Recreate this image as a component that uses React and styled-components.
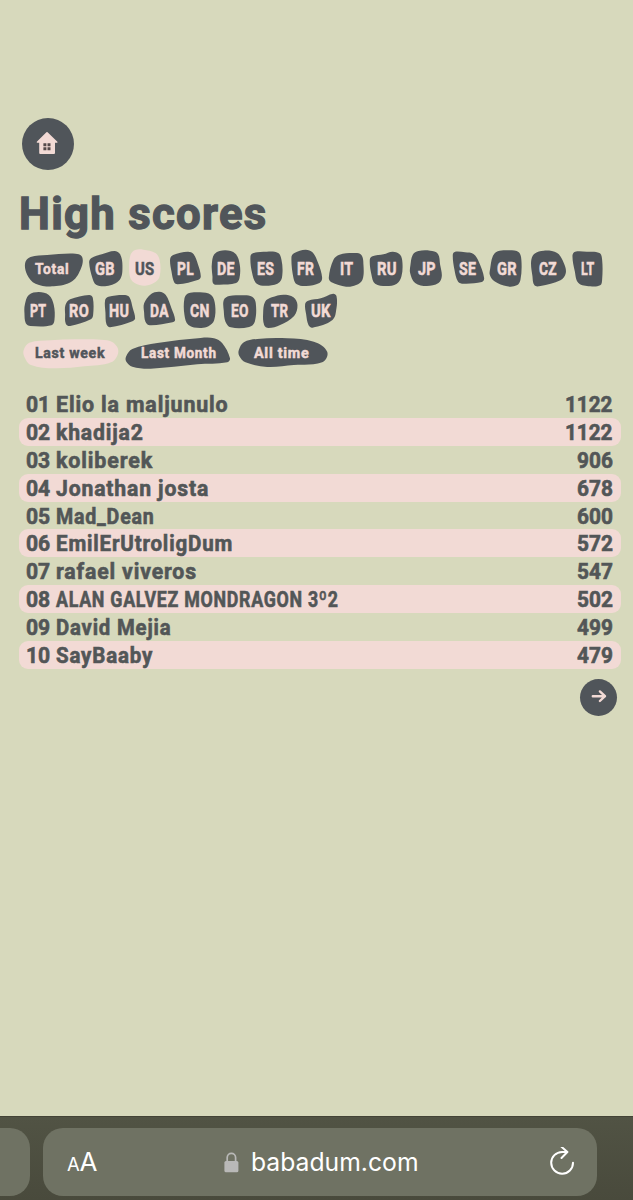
import React, { useLayoutEffect, useRef, useState } from "react";
import styled, { createGlobalStyle } from "styled-components";

const GlobalStyle = createGlobalStyle`
  * {
    box-sizing: border-box;
  }
  body {
    margin: 0;
    background: #d7d9bc;
    font-family: Roboto, "Liberation Sans", sans-serif;
  }
`;

const slate = "#50555a";
const pink = "#f2dad5";

const Page = styled.div`
  width: 633px;
  height: 1200px;
  display: flex;
  flex-direction: column;
  overflow: hidden;
  background: #d7d9bc;
  color: ${slate};
`;

const Content = styled.main`
  flex: 1;
  padding: 118px 12px 0 18.5px;
`;

const RoundButton = styled.button`
  display: flex;
  align-items: center;
  justify-content: center;
  width: ${(props) => props.$size}px;
  height: ${(props) => props.$size}px;
  padding: 0;
  border: 0;
  border-radius: 50%;
  background: ${slate};
  cursor: pointer;
`;

const HomeLine = styled.div`
  height: 52px;
  padding-left: 3.5px;
`;

const Title = styled.h1`
  height: 78px;
  margin: 0;
  padding: 17px 0 0 0;
  font-size: 45px;
  line-height: 53px;
  font-weight: 700;
  letter-spacing: 0.03em;
  -webkit-text-stroke: 1.3px ${slate};
`;

const TagList = styled.nav`
  display: flex;
  flex-wrap: wrap;
`;

const Tag = styled.a`
  display: grid;
  place-items: center;
  width: ${(props) => props.$width}px;
  height: 42px;
  color: ${(props) => (props.$active ? slate : pink)};
  font-size: ${(props) => props.$size}px;
  line-height: 20px;
  font-weight: 700;
  letter-spacing: ${(props) => props.$spacing}em;
  -webkit-text-stroke: 0.5px currentColor;
  cursor: pointer;

  & > * {
    grid-area: 1 / 1;
  }
`;

const Blob = styled.svg`
  width: 100%;
  height: 42px;
  overflow: visible;
  fill: ${(props) => (props.$active ? pink : slate)};
`;

const FitBox = styled.span`
  display: inline-flex;
  justify-content: ${(props) => (props.$align === "right" ? "flex-end" : "flex-start")};
  width: ${(props) => props.$width}px;
  white-space: nowrap;
`;

const FitInner = styled.span`
  flex: none;
  white-space: pre;
  transform-origin: ${(props) => props.$align} center;
`;

const Scores = styled.ol`
  margin: 16px 0 0;
  padding: 0;
  list-style: none;
`;

const ScoreRow = styled.li`
  display: flex;
  align-items: center;
  height: 27.9px;
  padding: 2px 8.5px 0 7px;
  border-radius: 9px;
  background: ${(props) => (props.$striped ? pink : "transparent")};
  color: #525657;
  font-size: 22px;
  line-height: 28px;
  font-weight: 700;
  -webkit-text-stroke: 0.6px currentColor;
`;

const Name = styled.span`
  flex: 1;
  margin-left: 6px;
  letter-spacing: 0.04em;
`;

const Pager = styled.div`
  display: flex;
  justify-content: flex-end;
  padding: 10px 4px 0 0;
`;

const BrowserBar = styled.footer`
  display: flex;
  gap: 13px;
  height: 84px;
  padding-top: 11px;
  border-top: 1px solid #434336;
  background: linear-gradient(#515344, #494a3c);
`;

const SideTab = styled.div`
  width: 30px;
  height: 68px;
  border-radius: 0 20px 20px 0;
  background: #6f7263;
`;

const AddressField = styled.div`
  display: flex;
  align-items: center;
  justify-content: space-between;
  width: 553.5px;
  height: 68px;
  padding: 0 22px 0 24px;
  border-radius: 20px;
  background: #6f7263;
  color: #fff;
  font-family: Inter, "Liberation Sans", sans-serif;
`;

const TextSize = styled.span`
  width: 27px;
  padding-top: 2px;
  font-size: 26px;
  line-height: 32px;
  letter-spacing: -0.01em;
  white-space: nowrap;

  small {
    font-size: 18.5px;
  }
`;

const Address = styled.span`
  display: flex;
  align-items: center;
  gap: 12px;
  font-size: 25px;
  line-height: 32px;
`;

const languages = [
  ["Total", 34, [-81, -18, -65, -36, -15, -42, 70, -46, 90, -36, 87, -3, 60, 37, 5, 52, -50, 44, -75, 17]],
  ["GB", 20, [-48, -20, -41, -33, -10, -44, 28, -54, 45, -44, 52, -8, 44, 32, 5, 51, -27, 47, -38, 28]],
  ["US", 19.5, [-48, 0, -44, -42, -30, -57, -5, -58, 31, -48, 44, -25, 44, 20, 32, 38, 0, 50, -30, 43, -44, 28]],
  ["PL", 16.5, [-45, -30, -36, -42, 8, -52, 25, -45, 39, -12, 47, 22, 40, 32, -22, 46, -33, 40, -41, 7]],
  ["DE", 18, [-43, -13, -34, -46, -3, -56, 28, -46, 41, -12, 40, 28, 30, 42, -20, 47, -38, 44, -41, 22]],
  ["ES", 17, [-47, -38, -38, -48, 2, -52, 36, -48, 46, -28, 49, 12, 41, 39, 8, 50, -28, 44, -42, 12]],
  ["FR", 17.5, [-44, -36, -35, -48, -2, -58, 19, -50, 36, -18, 48, 26, 40, 42, 0, 51, -28, 46, -38, 27]],
  ["IT", 13, [-38, -28, -20, -43, 20, -48, 45, -43, 52, -13, 49, 32, 30, 48, 0, 53, -44, 40, -52, 26]],
  ["RU", 19.5, [-52, -28, -44, -38, -11, -44, 17, -52, 39, -43, 46, -18, 43, 22, 29, 44, -3, 51, -36, 44, -47, 17]],
  ["JP", 18, [-43, -43, -26, -54, 9, -55, 32, -46, 39, -13, 44, 22, 34, 42, -1, 51, -36, 42, -51, 12, -50, -12]],
  ["SE", 17, [-43, -43, -36, -52, -6, -50, 19, -45, 35, -22, 51, 27, 44, 39, -11, 44, -27, 38, -38, 2]],
  ["GR", 20, [-43, -38, -28, -53, 7, -56, 35, -50, 43, -23, 40, 32, 29, 49, 0, 52, -38, 37, -52, 17, -51, 0]],
  ["CZ", 18, [-51, -23, -41, -46, -13, -55, 27, -48, 47, -18, 53, 12, 37, 34, -23, 51, -41, 49, -47, 22]],
  ["LT", 13.5, [-47, -40, -39, -52, -4, -52, 34, -48, 42, -28, 42, 32, 36, 49, 6, 52, -29, 42, -40, 7]],
  ["PT", 16.5, [-43, -18, -31, -48, -1, -57, 29, -48, 44, -18, 46, 27, 37, 43, -26, 45, -40, 37, -44, 7]],
  ["RO", 20, [-41, -18, -27, -35, 30, -48, 41, -40, 42, 12, 35, 25, -27, 45, -40, 38, -42, 10]],
  ["HU", 20.5, [-42, -33, -32, -43, 18, -48, 31, -41, 41, -8, 48, 22, 40, 31, -27, 49, -38, 40, -41, 5]],
  ["DA", 19, [-45, -23, -24, -51, 1, -58, 20, -48, 37, -8, 48, 27, 40, 34, -28, 43, -41, 32, -45, 5]],
  ["CN", 20, [-47, -38, -35, -53, 0, -56, 33, -48, 45, -18, 42, 28, 25, 46, 0, 51, -35, 42, -47, 12]],
  ["EO", 18, [-49, -33, -33, -45, 1, -47, 36, -43, 47, -23, 44, 32, 27, 48, -28, 49, -44, 32, -49, 0]],
  ["TR", 17.5, [-45, -28, -25, -41, 10, -49, 40, -41, 52, -18, 42, 15, 0, 42, -35, 51, -48, 42, -51, 7]],
  ["UK", 19.5, [-45, -21, -36, -31, 2, -38, 39, -52, 49, -45, 49, -8, 37, 27, -23, 50, -35, 42, -42, 10]],
];

const periods = [
  ["Last week", 104, 70.5, [-142, -9, -125, -31, -60, -38, 10, -41, 90, -40, 125, -32, 142, -4, 120, 28, 40, 40, -50, 46, -120, 36, -140, 11]],
  ["Last Month", 112, 76, [-159, 11, -140, -12, -65, -30, 65, -45, 105, -44, 130, -29, 153, 16, 145, 28, 55, 34, -85, 47, -140, 41, -158, 26]],
  ["All time", 95, 55.5, [-131, -9, -116, -32, -76, -42, 14, -44, 94, -34, 134, -4, 119, 28, 34, 36, -46, 42, -111, 28, -130, 8]],
];

const players = [
  ["Elio la maljunulo", 173, 1122],
  ["khadija2", 87.5, 1122],
  ["koliberek", 96.5, 906],
  ["Jonathan josta", 153, 678],
  ["Mad_Dean", 99, 600],
  ["EmilErUtroligDum", 177.5, 572],
  ["rafael viveros", 141, 547],
  ["ALAN GALVEZ MONDRAGON 3º2", 282.5, 502],
  ["David Mejia", 115.5, 499],
  ["SayBaaby", 97, 479],
];

// closed smooth curve through a flat list of x, y pairs
const blobPath = (flat) => {
  const pts = [];
  for (let i = 0; i < flat.length; i += 2) pts.push([flat[i], flat[i + 1]]);
  const n = pts.length;
  let d = `M${pts[0]}`;
  pts.forEach((p, i) => {
    const before = pts[(i + n - 1) % n];
    const next = pts[(i + 1) % n];
    const after = pts[(i + 2) % n];
    const len = Math.hypot(next[0] - p[0], next[1] - p[1]);
    const t1 = Math.hypot(next[0] - before[0], next[1] - before[1]);
    const t2 = Math.hypot(after[0] - p[0], after[1] - p[1]);
    const k = len * 0.34;
    const c1 = [p[0] + ((next[0] - before[0]) / t1) * k, p[1] + ((next[1] - before[1]) / t1) * k];
    const c2 = [next[0] - ((after[0] - p[0]) / t2) * k, next[1] - ((after[1] - p[1]) / t2) * k];
    d += `C${c1} ${c2} ${next}`;
  });
  return d + "Z";
};

// squeezes or widens its text to the given width
const Fit = ({ width, align = "left", children }) => {
  const ref = useRef(null);
  const [scale, setScale] = useState(1);

  useLayoutEffect(() => {
    setScale(width / ref.current.offsetWidth);
  }, [width]);

  return (
    <FitBox $width={width} $align={align}>
      <FitInner ref={ref} $align={align} style={{ transform: `scaleX(${scale})` }}>
        {children}
      </FitInner>
    </FitBox>
  );
};

const BlobTag = ({ label, width, textWidth, points, active, size, spacing }) => (
  <Tag $width={width} $active={active} $size={size} $spacing={spacing}>
    <Blob $active={active} viewBox={`${-width * 1.5} -63 ${width * 3} 126`}>
      <path d={blobPath(points)} />
    </Blob>
    <Fit width={textWidth}>{label}</Fit>
  </Tag>
);

const HomeIcon = () => (
  <svg width="52" height="52" viewBox="0 0 52 52">
    <path
      d="M25.6 14.2L35.4 23.7V24.8H33V35Q33 36 32 36H18.2Q17.2 36 17.2 35V24.8H14.8V23.7L24.4 14.2Q25 13.6 25.6 14.2Z"
      fill={pink}
    />
    <path d="M21.4 25.2h3v3h-3zM25.5 25.2h3v3h-3zM21.4 29.3h3v3h-3zM25.5 29.3h3v3h-3z" fill="#54494a" />
  </svg>
);

const ArrowIcon = () => (
  <svg width="37" height="37" viewBox="0 0 37 37" fill="none" stroke={pink} strokeWidth="2.4">
    <path d="M12.8 17.2H25M19.9 12.4L25 17.2L19.9 22" strokeLinecap="round" strokeLinejoin="round" />
  </svg>
);

const LockIcon = () => (
  <svg width="15" height="21" viewBox="0 0 15 21">
    <path d="M3.2 10V5.5a4.2 4.2 0 0 1 8.4 0V10" fill="none" stroke="#b9b9b8" strokeWidth="1.7" />
    <rect x="0.4" y="9" width="14" height="11.3" rx="1.6" fill="#b9b9b8" />
  </svg>
);

const ReloadIcon = () => (
  <svg width="26" height="30" viewBox="0 0 26 30" fill="none" stroke="#fff" strokeWidth="2">
    <path d="M24 15.7A10.9 10.9 0 1 1 13.1 4.9H17.5" strokeLinecap="round" />
    <path d="M12.5 -0.2L18.4 5L12.5 11" strokeLinecap="round" strokeLinejoin="round" />
  </svg>
);

const App = () => {
  return (
    <Page>
      <GlobalStyle />
      <Content>
        <HomeLine>
          <RoundButton $size={52} aria-label="Home">
            <HomeIcon />
          </RoundButton>
        </HomeLine>
        <Title>
          <Fit width={248.5}>High scores</Fit>
        </Title>
        <TagList>
          {languages.map(([label, textWidth, points]) => (
            <BlobTag
              key={label}
              label={label}
              width={label === "Total" ? 66.3 : 40.25}
              textWidth={textWidth}
              points={points}
              active={label === "US"}
              size={label === "Total" ? 15 : 17.5}
              spacing={label === "Total" ? 0.05 : 0.02}
            />
          ))}
        </TagList>
        <TagList>
          {periods.map(([label, width, textWidth, points]) => (
            <BlobTag
              key={label}
              label={label}
              width={width}
              textWidth={textWidth}
              points={points}
              active={label === "Last week"}
              size={15}
              spacing={0.05}
            />
          ))}
        </TagList>
        <Scores>
          {players.map(([name, width, score], i) => (
            <ScoreRow key={name} $striped={i % 2 === 1}>
              <Fit width={24}>{String(i + 1).padStart(2, "0")}</Fit>
              <Name>
                <Fit width={width}>{name}</Fit>
              </Name>
              <Fit width={score > 999 ? 48 : 36} align="right">
                {score}
              </Fit>
            </ScoreRow>
          ))}
        </Scores>
        <Pager>
          <RoundButton $size={37} aria-label="Next page">
            <ArrowIcon />
          </RoundButton>
        </Pager>
      </Content>
      <BrowserBar>
        <SideTab />
        <AddressField>
          <TextSize>
            <small>A</small>A
          </TextSize>
          <Address>
            <LockIcon />
            <Fit width={168}>babadum.com</Fit>
          </Address>
          <ReloadIcon />
        </AddressField>
      </BrowserBar>
    </Page>
  );
};

export default App;
